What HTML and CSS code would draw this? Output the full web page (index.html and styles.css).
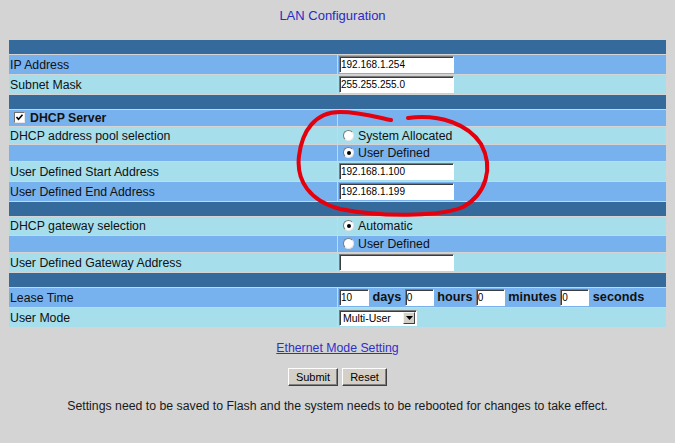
FILE: index.html
```html
<!DOCTYPE html>
<html>
<head>
<meta charset="utf-8">
<title>LAN Configuration</title>
<link rel="stylesheet" href="styles.css">
</head>
<body>
<div class="title">LAN Configuration</div>
<table class="cfg">
  <tr class="sep"><td colspan="2"></td></tr>
  <tr class="b in"><td>IP Address</td><td><input class="ip" value="192.168.1.254"></td></tr>
  <tr class="c in"><td>Subnet Mask</td><td><input class="ip" value="255.255.255.0"></td></tr>
  <tr class="sep"><td colspan="2"></td></tr>
  <tr class="b"><td class="dhcp"><span class="chk"><svg width="9" height="9" viewBox="0 0 9 9"><path d="M1.5 4 L3.5 6.2 L7.5 1.8" fill="none" stroke="#000" stroke-width="1.6"/></svg></span>DHCP Server</td><td></td></tr>
  <tr class="c rad"><td>DHCP address pool selection</td><td><span class="rb"></span>System Allocated</td></tr>
  <tr class="b"><td></td><td><span class="rb on"></span>User Defined</td></tr>
  <tr class="c in"><td>User Defined Start Address</td><td><input class="ip" value="192.168.1.100"></td></tr>
  <tr class="b in"><td>User Defined End Address</td><td><input class="ip" value="192.168.1.199"></td></tr>
  <tr class="sep"><td colspan="2"></td></tr>
  <tr class="c rad2"><td>DHCP gateway selection</td><td><span class="rb on"></span>Automatic</td></tr>
  <tr class="b"><td></td><td><span class="rb"></span>User Defined</td></tr>
  <tr class="c in"><td>User Defined Gateway Address</td><td><input class="ip" value=""></td></tr>
  <tr class="sep"><td colspan="2"></td></tr>
  <tr class="b in"><td>Lease Time</td><td class="lease"><input class="sm first" value="10"> <b>days</b> <input class="sm" value="0"> <b>hours</b> <input class="sm" value="0"> <b>minutes</b> <input class="sm" value="0"> <b>seconds</b></td></tr>
  <tr class="c in"><td>User Mode</td><td><span class="sel"><span class="sel-text">Multi-User</span><span class="sel-btn"><svg width="7" height="4" viewBox="0 0 7 4"><path d="M0 0 H7 L3.5 4 Z" fill="#000"/></svg></span></span></td></tr>
</table>
<div class="link"><a href="#">Ethernet Mode Setting</a></div>
<div class="actions"><button class="btn submit">Submit</button><button class="btn reset">Reset</button></div>
<div class="note">Settings need to be saved to Flash and the system needs to be rebooted for changes to take effect.</div>
<svg class="scribble" width="675" height="443" viewBox="0 0 675 443">
  <path d="M408 118 C440 114, 468 124, 481 144 C494 168, 486 194, 463 207 C440 217, 380 217, 340 209 C310 201, 296 181, 299 156 C302 131, 315 112, 340 112 C360 112, 376 117, 391 120" fill="none" stroke="#e4000c" stroke-width="4" stroke-linecap="round"/>
</svg>
</body>
</html>
```
FILE: styles.css
```css
body {
  margin: 8px;
  background: #d4d4d4;
  font-family: "Liberation Sans", Arial, sans-serif;
  font-size: 12.3px;
  color: #111;
}
.title {
  text-align: center;
  color: #2a2ac4;
  font-size: 13px;
  line-height: 16px;
  margin-bottom: 15px;
  padding-right: 10px;
}
.cfg {
  width: 100%;
  border-collapse: separate;
  border-spacing: 1px;
}
.cfg td {
  padding: 0 0 0 1px;
  height: 16px;
  width: 50%;
  line-height: 14px;
  vertical-align: middle;
  white-space: nowrap;
}
.cfg tr.sep td { background: #356a9c; height: 14px; }
.cfg tr.b td { background: #78b2ee; }
.cfg tr.c td { background: #a6deec; }
.cfg tr.in td { height: 19px; }
.cfg tr.rad td { height: 17px; }
.cfg tr.rad2 td { height: 18px; }
.dhcp { font-weight: bold; }
.chk {
  display: inline-block;
  width: 11px;
  height: 11px;
  box-sizing: border-box;
  background: #fff;
  border: 1px solid;
  border-color: #707070 #e8e8e8 #e8e8e8 #707070;
  margin: 0 5px 0 4px;
  vertical-align: -1px;
  position: relative;
}
.chk svg { display: block; }
.rb {
  display: inline-block;
  width: 11px;
  height: 11px;
  box-sizing: border-box;
  border-radius: 50%;
  background: #fff;
  border: 1px solid;
  border-color: #7a7a7a #e6e6e6 #e6e6e6 #7a7a7a;
  margin: 0 4px 0 4px;
  vertical-align: -1px;
  position: relative;
}
.rb.on::after {
  content: "";
  position: absolute;
  left: 2.5px;
  top: 2.5px;
  width: 4px;
  height: 4px;
  border-radius: 50%;
  background: #000;
}
input {
  font-family: "Liberation Sans", Arial, sans-serif;
  font-size: 10px;
  color: #000;
  background: #fff;
  box-sizing: border-box;
  height: 17px;
  margin: 0;
  padding: 0 1px;
  border: 1px solid;
  border-color: #7a7a7a #ffffff #ffffff #7a7a7a;
  box-shadow: inset 1px 1px 0 #3c3c3c;
  vertical-align: middle;
  outline: none;
}
input.ip { width: 115px; }
input.sm { width: 29px; }
input.sm.first { width: 30px; }
.lease b { font-size: 12.7px; }
.sel {
  display: inline-flex;
  align-items: center;
  box-sizing: border-box;
  width: 78px;
  height: 16px;
  background: #fff;
  border: 1px solid;
  border-color: #7a7a7a #ffffff #ffffff #7a7a7a;
  box-shadow: inset 1px 1px 0 #3c3c3c;
  vertical-align: middle;
}
.sel-text {
  flex: 1;
  font-size: 10.5px;
  padding-left: 3px;
  color: #000;
}
.sel-btn {
  width: 12px;
  height: 12px;
  box-sizing: border-box;
  margin-right: 1px;
  background: #d4d0c8;
  border: 1px solid;
  border-color: #f4f4f4 #404040 #404040 #f4f4f4;
  display: flex;
  align-items: center;
  justify-content: center;
}
.sel-btn svg { display: block; }
.link {
  text-align: center;
  margin-top: 13px;
  line-height: 14px;
}
.link a { color: #3030c8; }
.actions {
  display: flex;
  justify-content: center;
  gap: 4px;
  margin-top: 13px;
}
.btn {
  font-family: "Liberation Sans", Arial, sans-serif;
  font-size: 11px;
  color: #000;
  height: 18px;
  padding: 0;
  background: #d4d0c8;
  border: 1px solid;
  border-color: #ffffff #404040 #404040 #ffffff;
  box-shadow: inset -1px -1px 0 #808080;
}
.btn.submit { width: 50px; }
.btn.reset { width: 45px; }
.note {
  text-align: center;
  margin-top: 13px;
  line-height: 14px;
  color: #1a1a1a;
}
.scribble {
  position: absolute;
  left: 0;
  top: 0;
  pointer-events: none;
}
```
